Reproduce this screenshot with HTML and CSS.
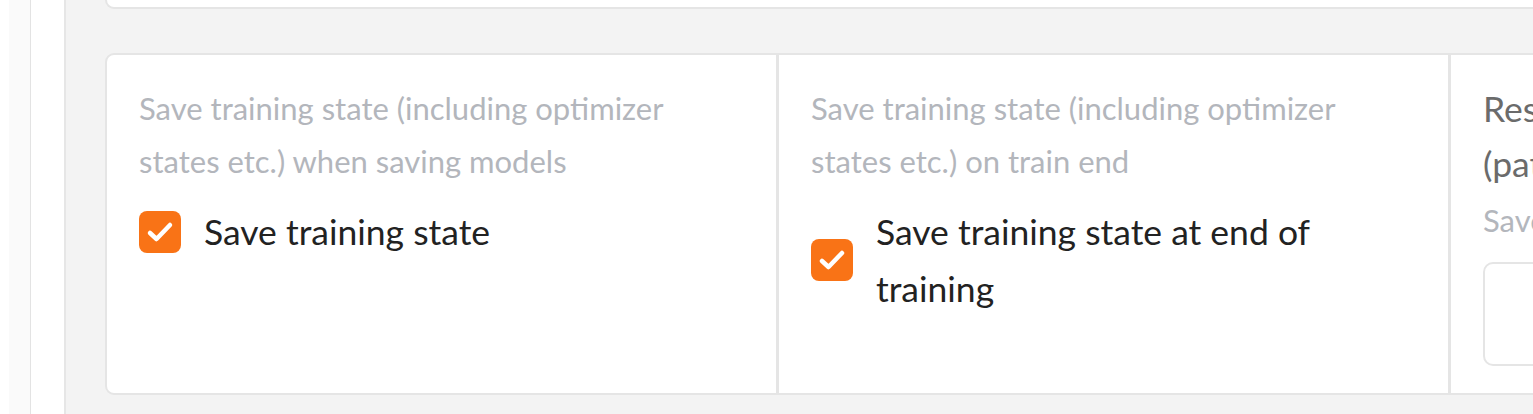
FILE: index.html
```html
<!DOCTYPE html>
<html>
<head>
<meta charset="utf-8">
<link rel="stylesheet" href="styles.css">
</head>
<body>
<div class="page">
  <div class="rail-a"></div>
  <div class="rail-b"></div>
  <div class="rail-line"></div>
  <div class="rail-c"></div>
  <div class="rail-line2"></div>
  <main class="main">
    <div class="prev-card"></div>
    <div class="card">
      <div class="col">
        <div class="info">Save training state (including optimizer states etc.) when saving models</div>
        <label class="check-row">
          <span class="box"><svg viewBox="0 0 42 42" width="42" height="42"><path d="M11 22 L17.5 28 L31 14" fill="none" stroke="#fff" stroke-width="4.5" stroke-linecap="round" stroke-linejoin="round"/></svg></span>
          <span class="check-label">Save training state</span>
        </label>
      </div>
      <div class="col">
        <div class="info">Save training state (including optimizer states etc.) on train end</div>
        <label class="check-row">
          <span class="box"><svg viewBox="0 0 42 42" width="42" height="42"><path d="M11 22 L17.5 28 L31 14" fill="none" stroke="#fff" stroke-width="4.5" stroke-linecap="round" stroke-linejoin="round"/></svg></span>
          <span class="check-label">Save training state at end of training</span>
        </label>
      </div>
      <div class="col">
        <div class="field-label">Resume from saved training state (path to "last-state" state folder)</div>
        <div class="info info-tight">Saved state to resume training from</div>
        <div class="textbox"></div>
      </div>
    </div>
  </main>
</div>
</body>
</html>
```

FILE: styles.css
```css
html, body {
  margin: 0;
  padding: 0;
  background: #ffffff;
  overflow: hidden;
}
.page {
  display: flex;
  width: 1533px;
  height: 414px;
  overflow: hidden;
  font-family: "Lato", "Liberation Sans", sans-serif;
}
.rail-a { width: 9px; background: #ffffff; flex: none; }
.rail-b { width: 21px; background: #fafafa; flex: none; }
.rail-line { width: 1px; background: #e3e3e3; flex: none; }
.rail-c { width: 33px; background: #ffffff; flex: none; }
.rail-line2 { width: 2px; background: #e6e6e6; flex: none; }
.main {
  flex: none;
  width: 2200px;
  background: #f3f3f3;
  padding-left: 39px;
  display: flex;
  flex-direction: column;
}
.prev-card {
  width: 2017px;
  height: 7px;
  background: #fff;
  border: 2px solid #e5e5e5;
  border-top: none;
  border-radius: 0 0 9px 9px;
  margin-bottom: 44px;
  box-sizing: content-box;
}
.card {
  width: 2013px;
  height: 338px;
  border: 2px solid #e5e5e5;
  border-radius: 9px;
  background: #e5e5e5;
  display: grid;
  grid-template-columns: 669px 669px 669px;
  column-gap: 3px;
  overflow: hidden;
}
.col {
  background: #ffffff;
  padding: 27px 33px 0 32px;
  display: flex;
  flex-direction: column;
}
.info {
  color: #b3b6bc;
  font-size: 31px;
  line-height: 52.5px;
  margin-bottom: 16px;
}
.check-row {
  display: flex;
  align-items: center;
  gap: 23px;
}
.box {
  flex: none;
  width: 42px;
  height: 42px;
  border-radius: 8px;
  background: #f97316;
  display: flex;
}
.check-label {
  color: #222222;
  font-size: 35.5px;
  line-height: 57px;
}
.field-label {
  color: #6b6b6b;
  font-size: 35.5px;
  line-height: 55px;
  margin-top: -1px;
}
.info-tight {
  line-height: 58px;
  margin-bottom: 13px;
}
.textbox {
  height: 100px;
  border: 2px solid #e5e5e5;
  border-radius: 10px;
  background: #fff;
}
```
